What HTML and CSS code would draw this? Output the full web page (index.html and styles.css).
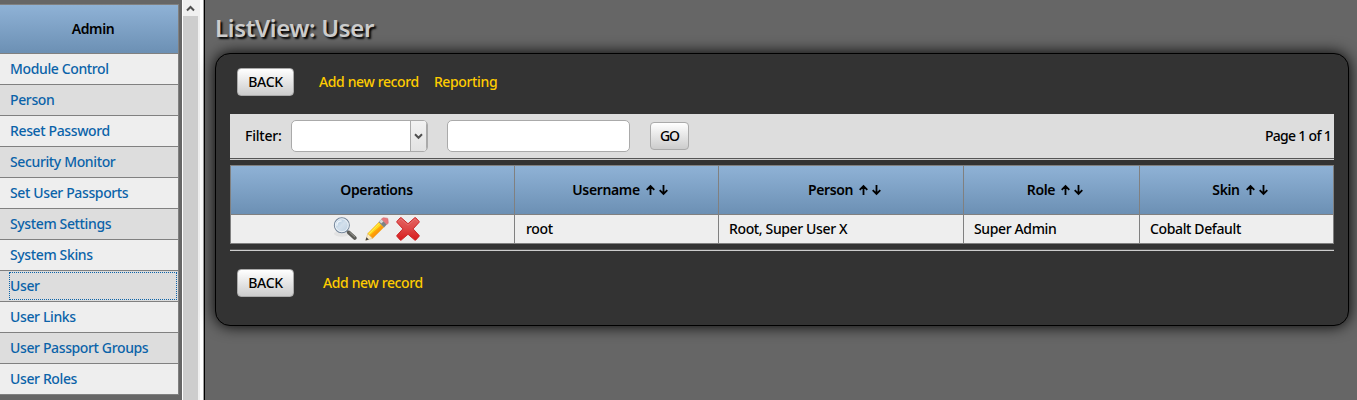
FILE: index.html
```html
<!DOCTYPE html>
<html lang="en">
<head>
<meta charset="utf-8">
<title>ListView: User</title>
<link rel="stylesheet" href="styles.css">
</head>
<body>
<div class="app">
  <nav class="sidebar">
    <div class="menu">
      <div class="menu-head"><span>Admin</span></div>
      <a class="item"><span>Module Control</span></a>
      <a class="item"><span>Person</span></a>
      <a class="item"><span>Reset Password</span></a>
      <a class="item"><span>Security Monitor</span></a>
      <a class="item"><span>Set User Passports</span></a>
      <a class="item"><span>System Settings</span></a>
      <a class="item"><span>System Skins</span></a>
      <a class="item focused"><span>User</span></a>
      <a class="item"><span>User Links</span></a>
      <a class="item"><span>User Passport Groups</span></a>
      <a class="item"><span>User Roles</span></a>
    </div>
  </nav>
  <div class="scrollbar">
    <div class="scroll-up"><svg width="9" height="7" viewBox="0 0 9 7"><path d="M1 5.5 4.5 2 8 5.5" fill="none" stroke="#505050" stroke-width="2"/></svg></div>
    <div class="thumb"></div>
  </div>
  <div class="splitter"></div>
  <main class="content">
    <h1>ListView: User</h1>
    <section class="panel">
      <div class="toolbar">
        <button class="btn back">BACK</button>
        <a class="link add">Add new record</a>
        <a class="link rep">Reporting</a>
      </div>
      <div class="filter">
        <label>Filter:</label>
        <div class="select"><div class="arrow"><svg width="9" height="7" viewBox="0 0 9 7"><path d="M1 1.3 4.5 4.8 8 1.3" fill="none" stroke="#505050" stroke-width="2"/></svg></div></div>
        <input class="search" type="text">
        <button class="btn go">GO</button>
        <span class="page">Page 1 of 1</span>
      </div>
      <hr>
      <div class="table">
        <div class="cell th"><span>Operations</span></div>
        <div class="cell th"><span>Username</span><svg class="sort" viewBox="0 0 24 12"><path d="M5.5 11V2M1.7 5.8 5.5 2l3.8 3.8M18.5 1v9M14.7 6.2l3.8 3.8 3.8-3.8"/></svg></div>
        <div class="cell th"><span>Person</span><svg class="sort" viewBox="0 0 24 12"><path d="M5.5 11V2M1.7 5.8 5.5 2l3.8 3.8M18.5 1v9M14.7 6.2l3.8 3.8 3.8-3.8"/></svg></div>
        <div class="cell th"><span>Role</span><svg class="sort" viewBox="0 0 24 12"><path d="M5.5 11V2M1.7 5.8 5.5 2l3.8 3.8M18.5 1v9M14.7 6.2l3.8 3.8 3.8-3.8"/></svg></div>
        <div class="cell th"><span>Skin</span><svg class="sort" viewBox="0 0 24 12"><path d="M5.5 11V2M1.7 5.8 5.5 2l3.8 3.8M18.5 1v9M14.7 6.2l3.8 3.8 3.8-3.8"/></svg></div>
        <div class="cell ops">
          <svg width="24" height="24" viewBox="0 0 25 25">
            <defs>
              <linearGradient id="lens" x1="0" y1="0" x2="1" y2="1"><stop offset="0" stop-color="#9fbcd8"/><stop offset=".5" stop-color="#d3e0ec"/><stop offset="1" stop-color="#b9cde0"/></linearGradient>
              <linearGradient id="pen" gradientUnits="userSpaceOnUse" x1="8" y1="9" x2="15" y2="17"><stop offset="0" stop-color="#ffcf10"/><stop offset=".45" stop-color="#ffdc1c"/><stop offset=".55" stop-color="#ffa60a"/><stop offset="1" stop-color="#f98a06"/></linearGradient>
              <linearGradient id="cross" x1="0" y1="0" x2="0" y2="1"><stop offset="0" stop-color="#e4615f"/><stop offset=".45" stop-color="#de4a49"/><stop offset="1" stop-color="#d8191b"/></linearGradient>
            </defs>
            <ellipse cx="9" cy="17.5" rx="8" ry="3" fill="#ddd" opacity=".7"/>
            <path d="M14.5 14.5l1.5 1.4" stroke="#777" stroke-width="2.4"/>
            <path d="M16.6 16.2l6 5.6" stroke="#5b5b57" stroke-width="4" stroke-linecap="round"/>
            <path d="M17.2 15.8l5.7 5.2" stroke="#a0a09a" stroke-width="1"/>
            <circle cx="9.2" cy="8.6" r="7.8" fill="url(#lens)" stroke="#75869a" stroke-width="1.1"/>
            <circle cx="9.2" cy="8.6" r="6.7" fill="none" stroke="#edf3f8" stroke-width="1"/>
            <path d="M4 9c0-3 2-5 5-5" fill="none" stroke="#eef5fb" stroke-width="1.4"/>
          </svg>
          <svg width="24" height="24" viewBox="0 0 25 25">
            <path d="M.8 24.2 2.9 17.2l5.2 5z" fill="#f8e9c4" stroke="#d6bb82" stroke-width=".6"/>
            <path d="M.5 24.5l1-3.5 2.6 2.5z" fill="#444"/>
            <path d="M2.9 17.2 14.4 5.4l5.2 5.3L8.1 22.2z" fill="url(#pen)" stroke="#f0a51c" stroke-width=".5"/>
            <path d="M4.2 17.6 15 6.6" stroke="#ffe95a" stroke-width="1"/>
            <path d="M14.2 5.2l3-3.1 5.6 5.8-3 3z" fill="#7d8381"/>
            <path d="M14.8 4.7l2.4-2.4 2.2 2.2-2.4 2.4z" fill="#d5d8d7"/>
            <path d="M17.2 2.1 18.3 1q.5-.4 1.1-.3l3.7.5q.7.1.8.8l.4 3.8q0 .6-.4 1l-1.1 1.1z" fill="#e8787b" stroke="#d2686c" stroke-width=".5"/>
          </svg>
          <svg width="24" height="24" viewBox="0 0 25 25">
            <path d="M5.5.8 12.5 7l7-6.2q.6-.4 1.1.1l3.4 3.6q.5.6 0 1.1l-6.2 6.8 6.2 6.7q.5.6 0 1.1l-3.4 3.8q-.6.5-1.1 0L12.5 18l-7 6q-.6.5-1.1 0L1 20.2q-.5-.5 0-1.1l6.2-6.7L1 5.6q-.5-.5 0-1.1L4.4.9Q4.9.4 5.5.8z" fill="url(#cross)" stroke="#c92325" stroke-width="1"/>
            <path d="M2 5 5 2l7.5 6.5L20 2l3 3" fill="none" stroke="#f09996" stroke-width=".7" opacity=".5"/>
          </svg>
        </div>
        <div class="cell"><span>root</span></div>
        <div class="cell"><span>Root, Super User X</span></div>
        <div class="cell"><span>Super Admin</span></div>
        <div class="cell"><span>Cobalt Default</span></div>
      </div>
      <hr>
      <div class="toolbar bottom">
        <button class="btn back">BACK</button>
        <a class="link add">Add new record</a>
      </div>
    </section>
  </main>
</div>
</body>
</html>
```
FILE: styles.css
```css
* { box-sizing: border-box; }
body { margin: 0; overflow: hidden; background: #666; color: #000; font: 500 14px/18px "Noto Sans", "Open Sans", sans-serif; letter-spacing: -.37px; }
span, label, .link { white-space: nowrap; }
.app { display: flex; height: 400px; }
.sidebar { width: 182px; padding-top: 4px; flex: none; }
.menu { width: 179px; border: solid #808080; border-width: 1px 1px 0 0; }
.menu-head { height: 49px; display: flex; align-items: center; justify-content: center; padding-left: 8px; border-bottom: 1px solid #808080; background: linear-gradient(#8fb2d6, #6c90b4); font-weight: 600; }
.item { display: flex; align-items: center; height: 31px; padding-left: 10px; border-bottom: 1px solid #808080; background: #eee; color: #0b63a9; }
.item:nth-child(odd) { background: #ddd; }
.item.focused { padding: 1px 1px 1px 9px; }
.focused span { flex: 1; height: 28px; line-height: 26px; border: 1px dotted #0b63a9; }
.scrollbar { width: 18px; flex: none; background: #f0f0f0; border-left: 1px solid #fff; display: flex; flex-direction: column; }
.scroll-up { height: 16px; display: flex; justify-content: center; align-items: center; padding-right: 2px; }
.thumb { width: 15px; flex: 1; background: #cdcdcd; }
.splitter { width: 5px; flex: none; background: linear-gradient(90deg, #fff 0 3px, #a0a0a0 3px 4px, #000 4px); }
.content { flex: 1; padding: 13px 8px 0 10px; }
h1 { margin: 0; height: 40px; font-size: 24px; line-height: 30px; font-weight: 600; color: #ccc; text-shadow: 2px 2px 2px #000; letter-spacing: -.35px; }
.panel { height: 273px; padding: 14px; border: 1px solid #000; border-radius: 15px; background: #333; box-shadow: 0 0 15px #000; }
.toolbar { display: flex; align-items: center; height: 28px; padding-left: 7px; }
.btn { height: 28px; padding: 0; border: 1px solid #aaa; border-radius: 4px; background: linear-gradient(#fff, #ccc); color: #000; font: inherit; letter-spacing: -.3px; }
.back { width: 57px; }
.link { color: #fc0; }
.toolbar .add { margin-left: 25px; }
.rep { margin-left: 15px; }
.filter { display: flex; align-items: center; height: 44px; margin-top: 18px; padding: 0 3px 0 15px; background: #ddd; }
.filter label { width: 37px; letter-spacing: -.2px; }
.select { width: 137px; height: 32px; margin-left: 9px; display: flex; justify-content: flex-end; overflow: hidden; border: 1px solid #aaa; border-radius: 5px; background: #fff; }
.arrow { width: 17px; display: flex; align-items: center; justify-content: center; border-left: 1px solid #aaa; border-right: 1px solid #aaa; background: linear-gradient(#f2f2f2, #e2e2e2); }
.search { width: 183px; height: 32px; margin: 0 0 0 19px; border: 1px solid #aaa; border-radius: 5px; background: #fff; }
.go { width: 39px; margin-left: 20px; letter-spacing: -1px; }
.page { margin-left: auto; letter-spacing: -.7px; }
hr { margin: 0; height: 2px; border: 0; background: linear-gradient(#555 50%, #ccc 50%); }
.table { display: grid; grid-template-columns: 284px 204px 245px 176px 195px; grid-template-rows: 49px 29px; margin: 5px 0; border: solid #808080; border-width: 1px 0 0 1px; width: 1104px; }
.cell { display: flex; align-items: center; padding-left: 10px; border: solid #808080; border-width: 0 1px 1px 0; background: #eee; }
.cell:nth-child(7) { padding-left: 11px; }
.cell:nth-child(5n) { width: 194px; }
.table .th { justify-content: center; padding: 0 0 0 8px; background: linear-gradient(#8fb2d6, #6c90b4); font-weight: 600; }
.sort { width: 24px; height: 12px; margin: 0 0 0 5px; fill: none; stroke: #000; stroke-width: 1.8; }
.table .ops { align-items: flex-start; justify-content: flex-start; gap: 7.5px; padding: 2px 0 0 102px; }
.bottom { margin-top: 18px; }
.bottom .add { margin-left: 29px; }
```
